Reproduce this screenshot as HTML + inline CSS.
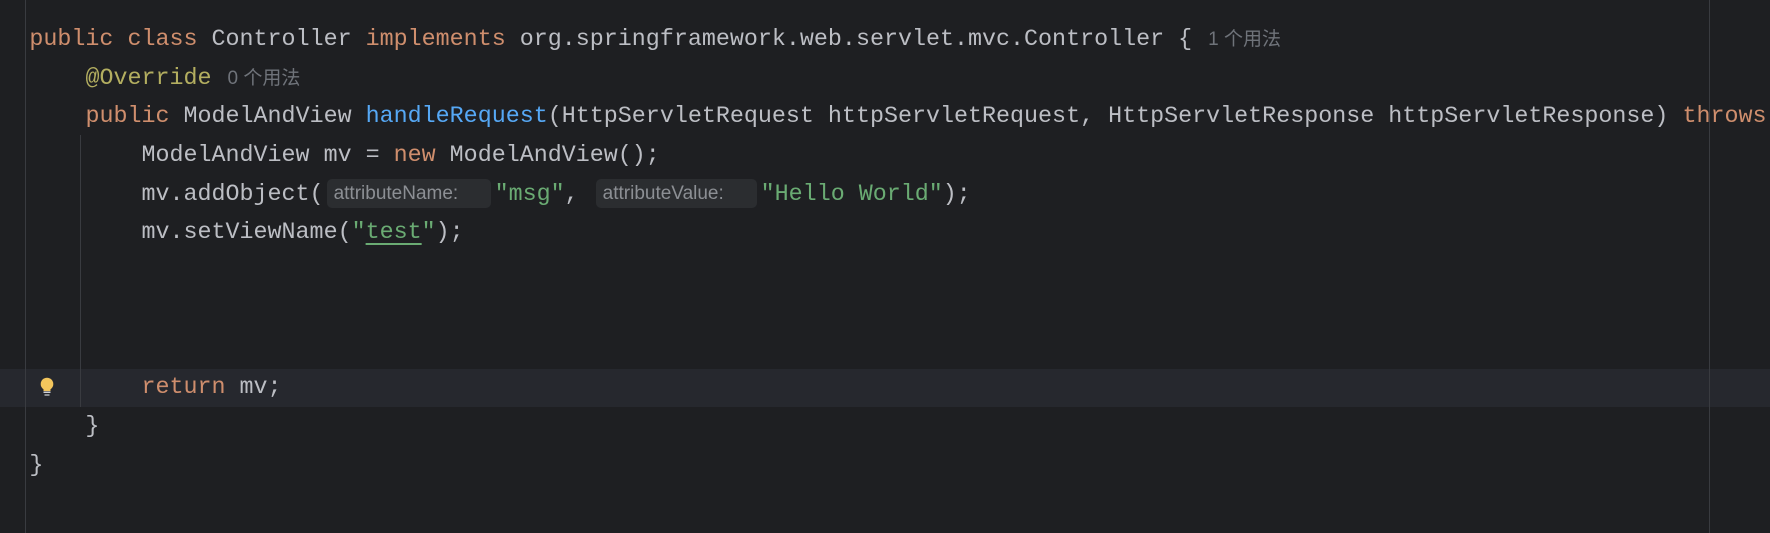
<!DOCTYPE html>
<html><head><meta charset="utf-8"><style>
html,body{margin:0;padding:0;background:#1e1f22;width:1770px;height:533px;overflow:hidden;position:relative}
.code{position:absolute;left:29.4px;top:21px;font-family:"Liberation Mono","Noto Sans CJK SC",monospace;font-size:23.35px;color:#bcbec4}
.l{height:38.7px;line-height:38.7px;white-space:pre}
.k{color:#cf8e6d}.m{color:#56a8f5}.a{color:#b3ae60}.s{color:#6aab73}
.h{font-family:"Liberation Sans","Noto Sans CJK SC",sans-serif;font-size:19px;color:#6f737a;margin-left:16px}
.p{display:inline-block;font-family:"Liberation Sans",sans-serif;font-size:19px;color:#8c8f94;background:#2b2d30;border-radius:5px;height:29px;line-height:29px;vertical-align:middle;position:relative;top:0px;padding-left:7px;box-sizing:border-box;margin:0 4px 0 3px}
.u{text-decoration:underline;text-decoration-color:#6aab73;text-underline-offset:5px}
</style></head><body>
<div style="position:absolute;left:0;top:369px;width:1770px;height:38px;background:#26282e"></div>
<div style="position:absolute;left:25px;top:0;width:1px;height:533px;background:#393b40"></div>
<div style="position:absolute;left:80px;top:135px;width:1px;height:272px;background:#393b40"></div>
<div style="position:absolute;left:1709px;top:0;width:1px;height:533px;background:#393b40"></div>
<svg style="position:absolute;left:38px;top:376px" width="18" height="22" viewBox="0 0 18 22"><circle cx="9" cy="8" r="6.3" fill="#f2c55c"/><rect x="5.5" y="11" width="7" height="4" fill="#f2c55c"/><rect x="5.5" y="15.5" width="7" height="1.5" fill="#ced0d6"/><rect x="6.5" y="18" width="5" height="2" fill="#8c8f94"/></svg>
<div class="code"><div class="l"><span class="k">public class </span>Controller <span class="k">implements </span>org.springframework.web.servlet.mvc.Controller {<span class="h">1 个用法</span></div><div class="l">    <span class="a">@Override</span><span class="h">0 个用法</span></div><div class="l">    <span class="k">public </span>ModelAndView <span class="m">handleRequest</span>(HttpServletRequest httpServletRequest, HttpServletResponse httpServletResponse) <span class="k">throws</span></div><div class="l">        ModelAndView mv = <span class="k">new </span>ModelAndView();</div><div class="l">        mv.addObject(<span class="p" style="width:164px">attributeName:</span><span class="s">"msg"</span>, <span class="p" style="width:161px">attributeValue:</span><span class="s">"Hello World"</span>);</div><div class="l">        mv.setViewName(<span class="s">"<span class="u">test</span>"</span>);</div><div class="l"> </div><div class="l"> </div><div class="l"> </div><div class="l">        <span class="k">return </span>mv;</div><div class="l">    }</div><div class="l">}</div></div>
</body></html>
